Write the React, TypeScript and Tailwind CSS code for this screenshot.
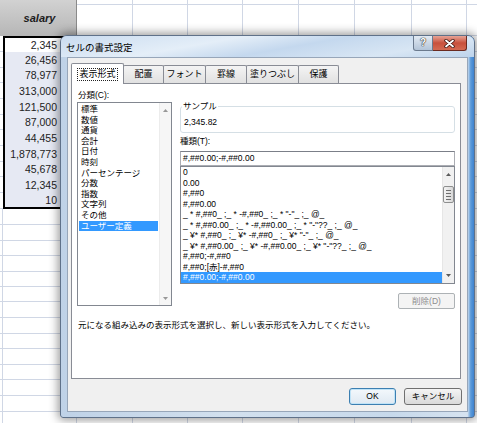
import React from "react";

const font = "font-['Liberation_Sans','Noto_Sans_CJK_JP',sans-serif]";

const colWidths = ["w-[56px]", "w-[55px]", "w-[55px]", "w-[56px]", "w-[56px]", "w-[57px]", "w-[55px]", "w-[56px]"];

const salaries = [
  { v: "2,345", h: "h-[16px]" },
  { v: "26,456", h: "h-[16px]" },
  { v: "78,977", h: "h-[15px]" },
  { v: "313,000", h: "h-[16px]" },
  { v: "121,500", h: "h-[16px]" },
  { v: "87,000", h: "h-[15px]" },
  { v: "44,455", h: "h-[16px]" },
  { v: "1,878,773", h: "h-[16px]" },
  { v: "45,678", h: "h-[15px]" },
  { v: "12,345", h: "h-[16px]" },
  { v: "10", h: "h-[16px]" },
];

const emptyRows = [
  "h-[16px]", "h-[16px]", "h-[15px]", "h-[16px]", "h-[15px]", "h-[15px]", "h-[16px]",
  "h-[16px]", "h-[15px]", "h-[16px]", "h-[15px]", "h-[16px]", "h-[16px]", "h-[15px]",
];

const categorias = [
  "標準", "数値", "通貨", "会計", "日付", "時刻", "パーセンテージ",
  "分数", "指数", "文字列", "その他", "ユーザー定義",
];

const formatos = [
  "0",
  "0.00",
  "#,##0",
  "#,##0.00",
  '_ * #,##0_ ;_ * -#,##0_ ;_ * "-"_ ;_ @_ ',
  '_ * #,##0.00_ ;_ * -#,##0.00_ ;_ * "-"??_ ;_ @_ ',
  '_ ¥* #,##0_ ;_ ¥* -#,##0_ ;_ ¥* "-"_ ;_ @_ ',
  '_ ¥* #,##0.00_ ;_ ¥* -#,##0.00_ ;_ ¥* "-"??_ ;_ @_ ',
  "#,##0;-#,##0",
  "#,##0;[赤]-#,##0",
  "#,##0.00;-#,##0.00",
];

const tabs = [
  { t: "配置", w: "w-[41px]" },
  { t: "フォント", w: "w-[43px]" },
  { t: "罫線", w: "w-[42px]" },
  { t: "塗りつぶし", w: "w-[53px]" },
  { t: "保護", w: "w-[41px]" },
];

const UpArrow = () => (
  <svg width="5" height="3" viewBox="0 0 5 3">
    <path d="M0 3 L2.5 0 L5 3 Z" fill="#5a5a5a" />
  </svg>
);

const DownArrow = () => (
  <svg width="5" height="3" viewBox="0 0 5 3">
    <path d="M0 0 L2.5 3 L5 0 Z" fill="#5a5a5a" />
  </svg>
);

const Hoja = () => {
  return (
    <div className="flex flex-col">
      {/* cabecera */}
      <div className="flex h-[36px]">
        <div className="w-[77px] shrink-0 bg-gradient-to-b from-[#d2d2d2] to-[#b6b6b6] border-r border-[#8a8a8a] flex items-center justify-center">
          <span className="text-[11px] font-bold italic text-[#1c1c1c] pl-[3px]">salary</span>
        </div>
        {colWidths.map((w, i) => (
          <div key={i} className={`${w} shrink-0 border-r border-b border-[#d0d7e5] pt-[4px]`}>
            <div className="h-full border-t border-[#d0d7e5]" />
          </div>
        ))}
      </div>

      {salaries.map((s, i) => (
        <div key={i} className={`flex ${s.h}`}>
          <div className="w-[3px] shrink-0 border-b border-[#d0d7e5]" />
          <div
            className={`w-[74px] shrink-0 border-l-2 border-l-black border-r border-r-[#d0d7e5] flex items-center justify-end pr-[19px] text-[10.5px] leading-none text-[#222] ${
              i === 0 ? "border-t-2 border-t-black bg-white" : "bg-[#e6e9f3]"
            } ${i === salaries.length - 1 ? "border-b-2 border-b-black" : ""}`}
          >
            {s.v}
          </div>
          {colWidths.map((w, j) => (
            <div key={j} className={`${w} shrink-0 border-r border-b border-[#d0d7e5]`} />
          ))}
        </div>
      ))}

      {emptyRows.map((h, i) => (
        <div key={i} className={`flex ${h}`}>
          <div className="w-[3px] shrink-0 border-r border-b border-[#d0d7e5]" />
          <div className="w-[74px] shrink-0 border-r border-b border-[#d0d7e5]" />
          {colWidths.map((w, j) => (
            <div key={j} className={`${w} shrink-0 border-r border-b border-[#d0d7e5]`} />
          ))}
        </div>
      ))}
    </div>
  );
};

const Dialogo = () => {
  return (
    <div className="absolute left-[60px] top-[35px] w-[415px] h-[383px] rounded-t-[7px] rounded-b-[3px] border border-[#5f7189] shadow-[0_0_10px_2px_rgba(0,0,0,0.4)] bg-[linear-gradient(to_right,#bfd2e7_0%,#d2e0ee_40%,#c7d9eb_80%,#d6e3f0_98.4%,#5c9ad9_99.2%,#3d82cf_100%)] flex flex-col overflow-hidden">
      {/* barra de titulo */}
      <div className="h-[21px] shrink-0 flex justify-between items-start bg-[linear-gradient(170deg,#cadcf0_0%,#e4eef8_35%,#c4d8ee_55%,#d8e6f4_80%,#bdd3eb_100%)]">
        <span className="pl-[5px] pt-[6px] text-[9.5px] leading-[11px] text-black">セルの書式設定</span>
        <div className="flex mr-[7px]">
          <div className="w-[20px] h-[15px] border border-[#6b7a8e] border-t-0 rounded-bl-[3px] bg-gradient-to-b from-[#e2eaf3] to-[#b3c4d8] flex items-center justify-center">
            <span className="text-[10px] leading-none font-bold text-white [text-shadow:0_0_1px_#333,0_0_1px_#333,0_0_1px_#333]">?</span>
          </div>
          <div className="w-[34px] h-[15px] border border-[#6a2a20] border-t-0 border-l-0 rounded-br-[3px] bg-gradient-to-b from-[#e6a396] via-[#c8503c] to-[#d46a52] flex items-center justify-center">
            <svg width="11" height="9" viewBox="0 0 11 9">
              <path d="M2 1.5 L9 7.5 M9 1.5 L2 7.5" stroke="#3d1510" strokeWidth="3.4" strokeLinecap="round" />
              <path d="M2 1.5 L9 7.5 M9 1.5 L2 7.5" stroke="#ffffff" strokeWidth="1.8" strokeLinecap="round" />
            </svg>
          </div>
        </div>
      </div>

      {/* area cliente */}
      <div className="mx-[6px] h-[355px] shrink-0 border border-[#97a6b9] bg-[#f0f0f0] flex flex-col pt-[5px] pl-[3px] pr-[6px]">
        {/* pestañas */}
        <div className="flex items-end h-[20px] relative z-10">
          <div className="w-[53px] h-[21px] -mb-px bg-white border border-b-0 border-[#898c95] rounded-t-[2px] flex items-center justify-center">
            <span className="border border-dotted border-[#222] px-[1px] text-[9px] leading-[11px]">表示形式</span>
          </div>
          {tabs.map((t) => (
            <div
              key={t.t}
              className={`${t.w} h-[18px] -ml-px border border-b-0 border-[#898c95] rounded-t-[2px] bg-gradient-to-b from-[#f4f4f4] to-[#e1e1e1] flex items-center justify-center text-[9px] leading-none`}
            >
              {t.t}
            </div>
          ))}
        </div>

        {/* panel */}
        <div className="h-[296px] border border-[#898c95] bg-white px-[5px] pt-[5px] flex flex-col">
          <div className="flex gap-[8px]">
            {/* categorias */}
            <div className="w-[95px] shrink-0 flex flex-col">
              <div className="h-[13px] leading-[13px] text-[8.5px] pl-[1px]">分類(C):</div>
              <div className="h-[204px] border border-[#828790] bg-white flex">
                <div className="flex-1 px-[1px] pt-[1px] text-[8.5px] leading-[10.6px]">
                  {categorias.map((c, i) => (
                    <div key={c} className={`pl-[2px] whitespace-nowrap ${i === categorias.length - 1 ? "bg-[#3399ff] text-white" : ""}`}>
                      {c}
                    </div>
                  ))}
                </div>
                <div className="w-[12px] bg-[#f6f6f6] border-l border-[#ececec] flex flex-col justify-between">
                  <div className="h-[14px] flex items-center justify-center opacity-60">
                    <UpArrow />
                  </div>
                  <div className="h-[14px] flex items-center justify-center opacity-60">
                    <DownArrow />
                  </div>
                </div>
              </div>
            </div>

            {/* derecha */}
            <div className="w-[275px] shrink-0 flex flex-col">
              <fieldset className="mt-[12px] border border-[#d5dfe5] rounded-[3px] pb-[4px]">
                <legend className="ml-[1px] px-[1px] text-[8.5px] leading-[11px]">サンプル</legend>
                <div className="pt-[5px] pl-[3px] text-[8.5px] leading-[11px]">2,345.82</div>
              </fieldset>

              <div className="mt-[3px] text-[8.5px] leading-[11px]">種類(T):</div>
              <div className="mt-[4px] h-[15px] border border-[#abadb3] border-t-[#7b7f88] bg-white pl-[2px] text-[8.5px] leading-[13px]">
                #,##0.00;-#,##0.00
              </div>
              <div className="h-[118px] border border-[#828790] bg-white flex">
                <div className="flex-1 overflow-hidden text-[8.5px] leading-[10.5px]">
                  {formatos.map((f, i) => (
                    <div key={i} className={`pl-[2px] whitespace-pre ${i === formatos.length - 1 ? "bg-[#3399ff] text-white" : ""}`}>
                      {f}
                    </div>
                  ))}
                </div>
                <div className="w-[12px] shrink-0 bg-[#f1f1f1] border-l border-[#e6e6e6] flex flex-col">
                  <div className="h-[15px] flex items-center justify-center">
                    <UpArrow />
                  </div>
                  <div className="mt-[4px] h-[17px] border border-[#8e8f8f] rounded-[2px] bg-gradient-to-r from-[#f4f4f4] to-[#d8d8d8] flex flex-col items-center justify-center gap-[2px]">
                    <div className="w-[5px] h-px bg-[#6f6f6f]" />
                    <div className="w-[5px] h-px bg-[#6f6f6f]" />
                    <div className="w-[5px] h-px bg-[#6f6f6f]" />
                    <div className="w-[5px] h-px bg-[#6f6f6f]" />
                  </div>
                  <div className="flex-1" />
                  <div className="h-[15px] flex items-center justify-center">
                    <DownArrow />
                  </div>
                </div>
              </div>

              <div className="mt-[9px] self-end w-[57px] h-[16px] border border-[#adb2b5] rounded-[2px] bg-[#f4f4f4] flex items-center justify-center text-[8.5px] leading-none text-[#8d8d8d]">
                削除(D)
              </div>
            </div>
          </div>

          <div className="mt-[11px] pl-[1px] text-[8.5px] leading-[11px] whitespace-nowrap">
            元になる組み込みの表示形式を選択し、新しい表示形式を入力してください。
          </div>
        </div>

        {/* botones */}
        <div className="mt-[9px] -mr-px flex justify-end gap-[8px]">
          <div className="w-[47px] h-[17px] border border-[#3c7fb1] rounded-[3px] bg-gradient-to-b from-[#f3f8fc] to-[#dfe9f2] shadow-[inset_0_0_0_1px_#bfe3f7] flex items-center justify-center text-[8.5px] leading-none">
            OK
          </div>
          <div className="w-[58px] h-[17px] border border-[#707070] rounded-[3px] bg-gradient-to-b from-[#f4f4f4] to-[#dadada] flex items-center justify-center text-[8.5px] leading-none">
            キャンセル
          </div>
        </div>
      </div>
    </div>
  );
};

export default function App() {
  return (
    <div className={`relative w-[477px] h-[423px] overflow-hidden bg-white text-black ${font}`}>
      <Hoja />
      <Dialogo />
    </div>
  );
}
